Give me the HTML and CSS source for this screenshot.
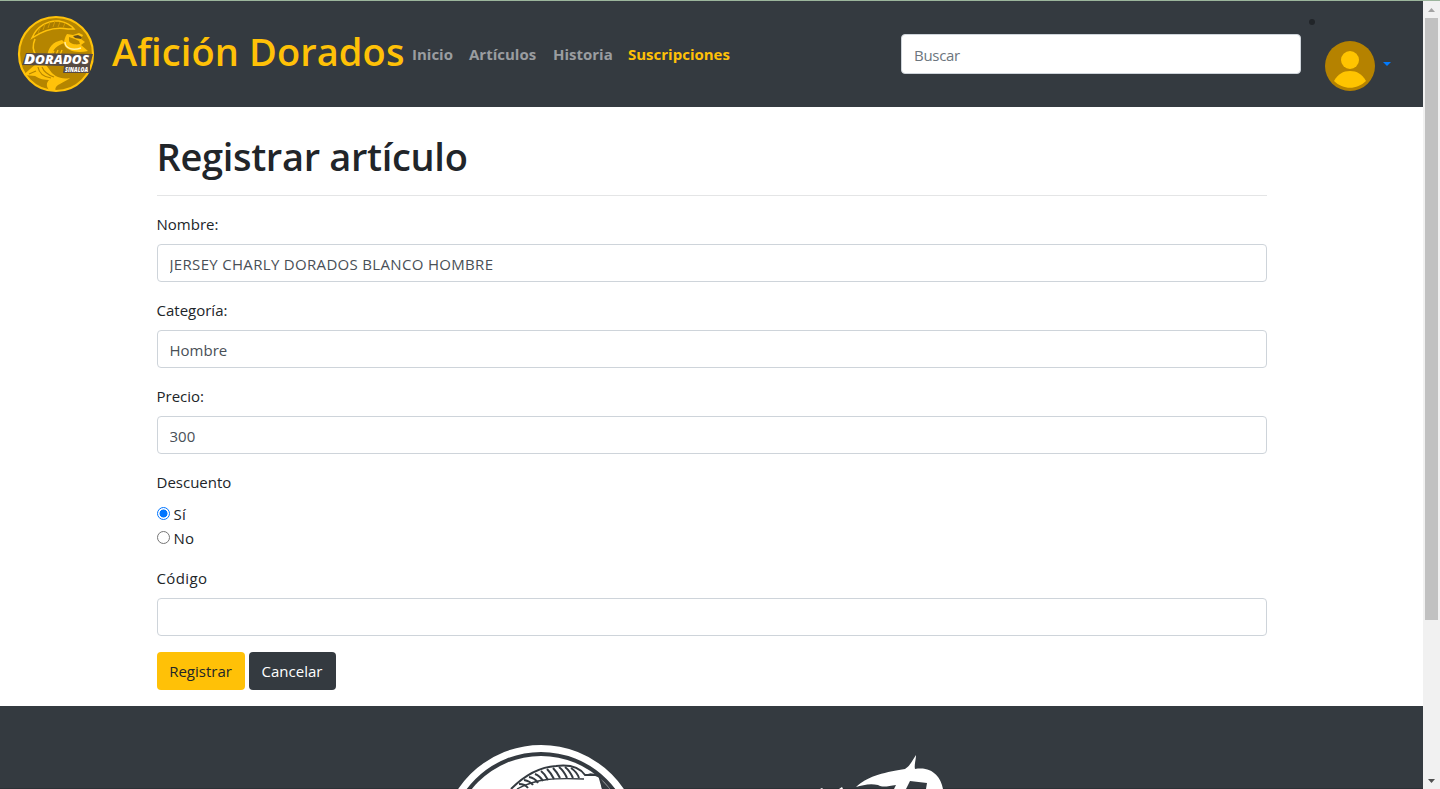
FILE: index.html
```html
<!DOCTYPE html>
<html lang="es">
<head>
<meta charset="utf-8">
<title>Afición Dorados</title>
<link rel="stylesheet" href="styles.css">
</head>
<body>
<div class="page">
  <header class="navbar">
    <svg class="logo" width="78" height="78" viewBox="0 0 78 78">
      <circle cx="39" cy="39" r="37" fill="#b58500" stroke="#ffc20a" stroke-width="2.200"/>
      <path d="M15 23C20 11 31 5 42 6C48 7 53 9 57 14L51 14C37 11 25 16 15 23Z" fill="#a97c00" stroke="#ffc20a" stroke-width="1.500"/>
      <path d="M21 18l2-5M26 15l2-6M31 13l2-6M36 12l2-6M41 12l2-5M46 13l2-5" stroke="#d49b00" stroke-width="1"/>
      <path d="M30 42C31 32 36 27 45 25L48 28C40 30 36 34 34 42Z" fill="#ffc20a"/>
      <path d="M18 24C15 31 16 36 19 40" fill="none" stroke="#ffc20a" stroke-width="1.600"/>
      <path d="M50 19L56 20L62 18L66 20L64 24L68 27L64 30L71 36C61 38 50 37 47 29C47 25 48 22 50 19Z" fill="#ffc20a"/>
      <path d="M52 22L58 24L62 26L63 29C59 30 53 29 52 26Z" fill="#b58500"/>
      <path d="M56 21l5-1 4 2-1 2-6-1z" fill="#67511c"/>
      <path d="M48 27C48 33 55 36 64 33" fill="none" stroke="#fff0a8" stroke-width="1.400"/>
      <path d="M41 35l-2 5M45 35l-2 5M37 36l-2 4" stroke="#ffc20a" stroke-width="1.300"/>
      <path d="M18 50C13 54 9 57 7 60L18 61C23 64 27 65 32 65C29 68 29 72 33 76L39 76C36 70 47 68 53 63C44 65 36 61 32 54L29 50Z" fill="#ffc20a"/>
      <path d="M21 52C22 58 27 62 34 63M25 52C27 57 31 60 37 62M12 59L19 56" fill="none" stroke="#b58500" stroke-width="1.200"/>
      <path d="M9 38L76 39L73 50L73 58L46 58L47 51L5 50Z" fill="#574b43"/>
      <text x="7" y="48.5" class="logo-name" textLength="65" lengthAdjust="spacingAndGlyphs">D<tspan class="logo-small">ORADOS</tspan></text>
      <text x="48" y="57" class="logo-city" textLength="23" lengthAdjust="spacingAndGlyphs">SINALOA</text>
    </svg>
    <span class="brand">Afición Dorados</span>
    <nav class="links">
      <a class="l1">Inicio</a><a class="l2">Artículos</a><a class="l3">Historia</a><a class="l4">Suscripciones</a>
    </nav>
    <input class="search" placeholder="Buscar">
    <span class="dot"></span>
    <svg class="avatar" width="50" height="50" viewBox="0 0 50 50">
      <circle cx="25" cy="25" r="25" fill="#b58200"/>
      <circle cx="25" cy="19" r="9" fill="#ffc400"/>
      <path d="M9 40C13 33 18 30 25 30S37 33 41 40C32 49 18 49 9 40Z" fill="#ffc400"/>
    </svg>
    <span class="caret"></span>
  </header>
  <main class="container">
    <h1><span>Registrar artículo</span></h1>
    <label>Nombre:</label>
    <input class="field name" value="JERSEY CHARLY DORADOS BLANCO HOMBRE">
    <label>Categoría:</label>
    <input class="field" value="Hombre">
    <label>Precio:</label>
    <input class="field" value="300">
    <label class="discount">Descuento</label>
    <div class="option"><span class="radio checked"></span>Sí</div>
    <div class="option last"><span class="radio"></span>No</div>
    <label class="code">Código</label>
    <input class="field">
    <div class="actions"><button class="btn primary">Registrar</button><button class="btn dark">Cancelar</button></div>
  </main>
  <footer class="footer">
    <svg width="210" height="59" viewBox="0 0 210 59">
      <circle cx="101" cy="115" r="96.5" fill="none" stroke="#fff" stroke-width="7"/>
      <circle cx="101" cy="115" r="89" fill="#fff"/>
      <path d="M71 59C83 47 99 37 116 36C132 34 140 38 145 45L159 45L163 59" fill="none" stroke="#343a40" stroke-width="2"/>
      <path d="M77 59C97 48 116 48 144 49" fill="none" stroke="#343a40" stroke-width="1.400"/>
      <path d="M79 54q6 0 9 4M84 50q6 1 9 5M89 47q6 1 9 6M95 44q5 2 8 7M101 41q4 3 7 9M107 39q4 4 7 10M113 38q4 4 7 10M119 37q5 4 8 11M125 37q5 4 8 11M131 38q6 4 8 10" fill="none" stroke="#343a40" stroke-width="2"/>
      <path d="M148 43L156 44L170 59H162L160 48Z" fill="#343a40"/>
    </svg>
    <svg width="170" height="49" viewBox="0 0 170 49">
      <path d="M56 47C67 37 80 33 105 29C110 26 112 21 116 15C116 20 114 25 115 29C132 26 141 37 143 49H126L127 43L110 41L106 49H94L96 45C88 46 83 48 78 45C70 43 63 45 56 47Z" fill="#fff"/>
      <path d="M20 49l2-1 1 1M39 49l3-2 1 2" fill="#fff"/>
    </svg>
  </footer>
</div>
<aside class="scrollbar">
  <svg width="17" height="17" viewBox="0 0 17 17"><path d="M5 11L8.500 7L12 11Z" fill="#a3a3a3"/></svg>
  <span class="thumb"></span>
  <svg class="down" width="17" height="17" viewBox="0 0 17 17"><path d="M5 7H12L8.500 11Z" fill="#505050"/></svg>
</aside>
</body>
</html>
```
FILE: styles.css
```css
* { box-sizing: border-box; }
body { margin: 0; height: 789px; overflow: hidden; display: flex; border-top: 1px solid #9bb59c; font: 15px/24px "Open Sans", "Noto Sans", sans-serif; color: #212529; background: #fff; }
.page { width: 1423px; height: 788px; overflow: hidden; }
.navbar { position: relative; height: 106px; background: #343a40; display: flex; align-items: flex-start; padding: 0 0 0 17px; }
.logo { margin-top: 14px; flex: none; }
.logo-name { font: italic 900 14px "Open Sans", sans-serif; fill: #fff; }
.logo-small { font-size: 11.5px; }
.logo-city { font: italic 800 7px "Open Sans", sans-serif; fill: #fff; }
.brand { margin: 20px 0 0 17px; width: 300px; font-size: 38px; line-height: 60px; font-weight: 600; color: #ffc107; white-space: nowrap; letter-spacing: 0.1px; }
.links { display: flex; margin-top: 41px; font-weight: 700; color: #9a9da0; white-space: nowrap; width: 489px; }
.l1 { width: 57px; }
.l2 { width: 84px; }
.l3 { width: 75px; }
.l4 { color: #ffc107; }
.search { margin-top: 33px; width: 400px; height: 40px; border: 1px solid #ced4da; border-radius: 4px; padding: 2px 12px 0; font: inherit; color: #495057; letter-spacing: -0.3px; }
.search::placeholder { color: #6c757d; }
.dot { position: absolute; left: 1309px; top: 18px; width: 6px; height: 6px; border-radius: 50%; background: #212529; }
.avatar { margin: 40px 0 0 24px; flex: none; }
.caret { margin: 61px 0 0 8px; border: 4px solid transparent; border-top-color: #007bff; border-bottom: 0; }
.container { margin: 0 auto; width: 1110px; height: 599px; }
h1 { margin: 0 0 16px; height: 89px; padding-top: 23px; border-bottom: 1px solid #e4e5e6; font-size: 38px; line-height: 52px; font-weight: 600; letter-spacing: -0.33px; }
label { display: block; height: 24px; margin-bottom: 8px; line-height: 24px; }
.field { display: block; width: 100%; height: 38px; margin: 0 0 16px; padding: 1px 12px 0; border: 1px solid #ced4da; border-radius: 4px; font: inherit; color: #495057; }
.name { letter-spacing: 0.32px; }
.code { letter-spacing: 0.4px; }
.discount { margin-bottom: 7px; }
.option { display: flex; height: 24px; line-height: 26px; gap: 4px; letter-spacing: 0.3px; }
.last { margin-bottom: 17px; }
.radio { width: 13px; height: 13px; margin-top: 6px; border: 1px solid #767676; border-radius: 50%; }
.checked { border-color: #0075ff; background: radial-gradient(circle, #0075ff 3.7px, #fff 4.3px); }
.actions { display: flex; gap: 4px; }
.btn { width: 88px; height: 38px; border: 0; border-radius: 4px; padding: 0; font: inherit; white-space: nowrap; }
.primary { background: #ffc107; color: #212529; }
.dark { width: 87px; background: #343a40; color: #fff; }
.footer { height: 83px; background: #343a40; display: flex; justify-content: flex-start; align-items: flex-end; padding-left: 440px; gap: 150px; border-bottom: 1px solid #2c3136; }
.footer svg { margin-bottom: -1px; }
.scrollbar { width: 17px; height: 788px; background: #f1f1f1; display: flex; flex-direction: column; }
.thumb { width: 13px; height: 602px; margin-left: 2px; background: #c1c1c1; }
.down { margin-top: auto; }
```
